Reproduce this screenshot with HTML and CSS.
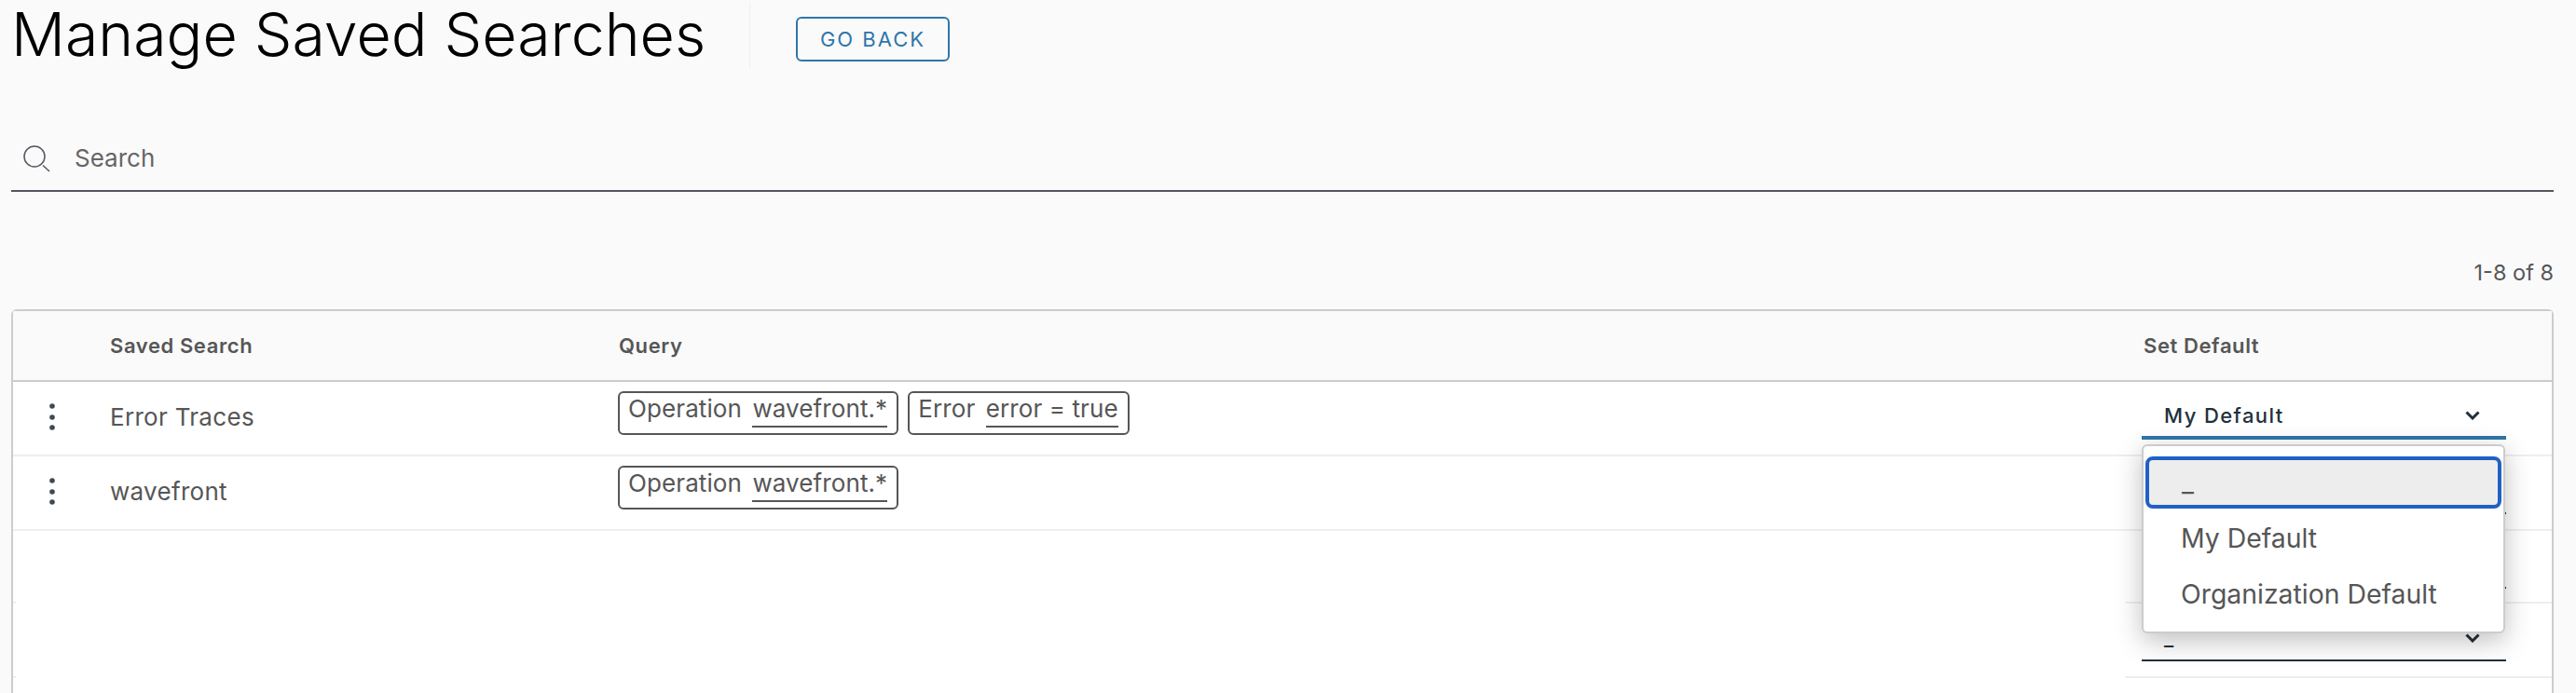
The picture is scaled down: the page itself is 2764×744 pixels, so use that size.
FILE: index.html
```html
<!DOCTYPE html>
<html>
<head>
  <meta charset="utf-8">
  <title>Manage Saved Searches</title>
  <link rel="stylesheet" href="styles.css">
</head>
<body>
  <div class="page-head">
    <h1 class="title">Manage Saved Searches</h1>
    <div class="head-sep">
      <button class="back-btn">GO BACK</button>
    </div>
  </div>

  <div class="search">
    <svg class="search-icon" width="30" height="30" viewBox="0 0 30 30">
      <circle cx="12" cy="12" r="11" fill="none" stroke="#565660" stroke-width="1.5"/>
      <path d="M21 21.5 L28 28" fill="none" stroke="#565660" stroke-width="1.5"/>
    </svg>
    <span class="search-text">Search</span>
  </div>

  <div class="count">1-8 of 8</div>

  <div class="table">
    <div class="row head">
      <div></div>
      <div class="th">Saved Search</div>
      <div class="th">Query</div>
      <div class="th th-last">Set Default</div>
    </div>

    <div class="row">
      <div class="cell-dots">
        <svg width="8" height="32" viewBox="0 0 8 32"><circle cx="4" cy="4" r="2.8"/><circle cx="4" cy="16" r="2.8"/><circle cx="4" cy="27" r="2.8"/></svg>
      </div>
      <div class="name">Error Traces</div>
      <div class="chips">
        <div class="chip">Operation <u>wavefront.*</u></div>
        <div class="chip">Error <u>error = true</u></div>
      </div>
      <div class="cell-select">
        <div class="select focus">
          <span>My Default</span>
          <svg class="chev" width="16" height="10" viewBox="0 0 16 10"><path d="M1.5 1.5 L8 8 L14.5 1.5"/></svg>
          <div class="menu">
            <div class="opt active">_</div>
            <div class="opt">My Default</div>
            <div class="opt">Organization Default</div>
          </div>
        </div>
      </div>
    </div>

    <div class="row">
      <div class="cell-dots">
        <svg width="8" height="32" viewBox="0 0 8 32"><circle cx="4" cy="4" r="2.8"/><circle cx="4" cy="16" r="2.8"/><circle cx="4" cy="27" r="2.8"/></svg>
      </div>
      <div class="name">wavefront</div>
      <div class="chips">
        <div class="chip">Operation <u>wavefront.*</u></div>
      </div>
      <div class="cell-select">
        <div class="select">
          <span>_</span>
          <svg class="chev" width="16" height="10" viewBox="0 0 16 10"><path d="M1.5 1.5 L8 8 L14.5 1.5"/></svg>
        </div>
      </div>
    </div>

    <div class="row empty short">
      <div class="stub"></div>
      <div></div>
      <div></div>
      <div class="cell-select">
        <div class="select">
          <span>_</span>
          <svg class="chev" width="16" height="10" viewBox="0 0 16 10"><path d="M1.5 1.5 L8 8 L14.5 1.5"/></svg>
        </div>
      </div>
    </div>

    <div class="row empty">
      <div class="stub"></div>
      <div></div>
      <div></div>
      <div class="cell-select">
        <div class="select">
          <span>_</span>
          <svg class="chev" width="16" height="10" viewBox="0 0 16 10"><path d="M1.5 1.5 L8 8 L14.5 1.5"/></svg>
        </div>
      </div>
    </div>
  </div>
</body>
</html>
```

FILE: styles.css
```css
*{
  box-sizing: border-box;
  margin: 0;
  padding: 0;
}
html, body{
  height: 744px;
  overflow: hidden;
}
body{
  display: flex;
  flex-direction: column;
  padding: 0 24px 0 12px;
  background: #fafafa;
  font-family: "Inter", "Liberation Sans", sans-serif;
  color: #565656;
}
.page-head{
  display: flex;
  height: 76px;
  flex: none;
}
.title{
  width: 792px;
  padding: 1px 0 0 0;
  font-size: 64.4px;
  line-height: 72px;
  font-weight: 300;
  color: #000;
}
.head-sep{
  height: 72px;
  margin-top: 2px;
  padding: 16px 0 0 49px;
  border-left: 1px solid #f0f0f0;
}
.back-btn{
  display: block;
  width: 165px;
  height: 48px;
  background: none;
  border: 2px solid #2f76aa;
  border-radius: 6px;
  font-family: inherit;
  font-size: 22px;
  font-weight: 400;
  letter-spacing: 2px;
  color: #2f76aa;
}

.search{
  display: flex;
  align-items: center;
  flex: none;
  height: 76px;
  margin-top: 54px;
  padding: 0 0 0 13px;
  border-bottom: 2px solid #565660;
}
.search-icon{
  margin-top: 7px;
}
.search-text{
  margin-top: 5px;
  margin-left: 25px;
  font-size: 26px;
  color: #666;
}
.count{
  flex: none;
  height: 126px;
  padding-top: 70px;
  font-size: 23.5px;
  line-height: 34px;
  text-align: right;
}

.table{
  flex: 1;
  background: #fff;
  border: 2px solid #ccc;
  border-bottom: 0;
  border-radius: 6px 6px 0 0;
}
.row{
  display: grid;
  grid-template-columns: 104px 546px 1616px 1fr;
  height: 80px;
  border-bottom: 2px solid #eee;
}
.row.head{
  height: 76px;
  background: #fafafa;
  border-bottom-color: #ccc;
  align-items: center;
}
.row.empty{
  border-bottom: 0;
}
.row.short{
  height: 78px;
}
.row.empty .cell-select{
  border-bottom: 2px solid #eee;
}
.stub{
  width: 3px;
  border-bottom: 2px solid #eee;
}
.th{
  padding-bottom: 1px;
  font-size: 22px;
  font-weight: 600;
  letter-spacing: .6px;
}
.th-last{
  padding-left: 20px;
}
.cell-dots{
  padding: 22px 0 0 38px;
}
.cell-dots svg{
  display: block;
  fill: #3c4a55;
}
.name{
  padding-top: 21px;
  font-size: 26px;
  letter-spacing: .3px;
  line-height: 34px;
}
.chips{
  display: flex;
  gap: 10px;
  margin-left: -1px;
  padding-top: 10px;
}
.chip{
  height: 47px;
  padding: 0 10px 0 9px;
  background: #fff;
  border: 2px solid #565656;
  border-radius: 6px;
  font-size: 26px;
  letter-spacing: .1px;
  line-height: 34px;
  white-space: pre;
}
.chip u{
  display: inline-block;
  height: 37px;
  margin-left: 4px;
  text-decoration: none;
  border-bottom: 2px solid #565656;
}
.cell-select{
  padding-left: 18px;
}
.select{
  position: relative;
  display: flex;
  justify-content: space-between;
  align-items: center;
  width: 391px;
  height: 44px;
  margin-top: 18px;
  padding: 0 28px 4px 24px;
  border-bottom: 2px solid #22303c;
  font-size: 22px;
  font-weight: 500;
  letter-spacing: 1.4px;
  color: #22303c;
}
.select.focus{
  border-bottom: 4px solid #2f76aa;
}
.chev{
  fill: none;
  stroke: #22303c;
  stroke-width: 3;
}
.menu{
  position: absolute;
  z-index: 5;
  top: 49px;
  left: 0;
  width: 390px;
  height: 203px;
  padding: 11px 2px 0;
  background: #fff;
  border: 2px solid #ccc;
  border-radius: 6px;
  box-shadow: 0 8px 28px rgba(0, 0, 0, .25);
  font-size: 28.4px;
  font-weight: 400;
  letter-spacing: 0;
  color: #565656;
}
.opt{
  height: 60px;
  padding-left: 38px;
  line-height: 57px;
}
.opt.active{
  height: 56px;
  margin-bottom: 3px;
  background: #ededed;
  border: 4px solid #2160c4;
  border-radius: 8px;
  padding-left: 35px;
  line-height: 48px;
}
```
